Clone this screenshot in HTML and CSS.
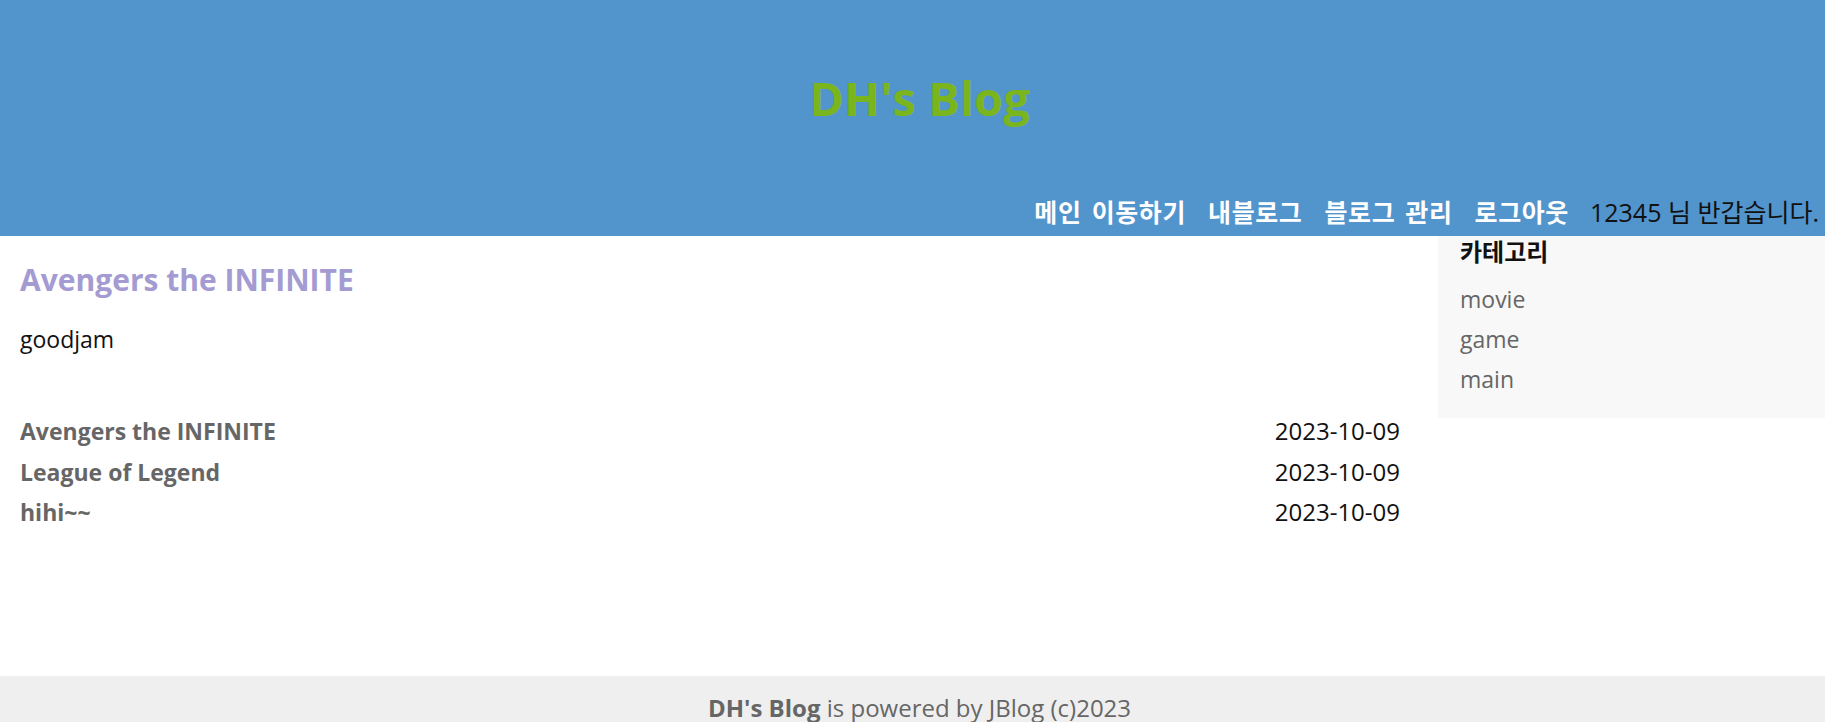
FILE: index.html
```html
<!DOCTYPE html>
<html lang="ko">
<head>
<meta charset="utf-8">
<title>DH's Blog</title>
<link rel="stylesheet" href="styles.css">
</head>
<body>
<div class="page">
  <header class="header">
    <h1 class="site-title">DH's Blog</h1>
    <nav class="nav">
      <a class="nav-link" href="#">메인 이동하기</a>
      <a class="nav-link" href="#">내블로그</a>
      <a class="nav-link" href="#">블로그 관리</a>
      <a class="nav-link" href="#">로그아웃</a>
      <span class="greeting">12345 님 반갑습니다.</span>
    </nav>
  </header>
  <div class="wrapper">
    <main class="content">
      <h2 class="post-title">Avengers the INFINITE</h2>
      <p class="post-body">goodjam</p>
      <ul class="post-list">
        <li class="post-row"><a class="post-link" href="#">Avengers the INFINITE</a><span class="post-date">2023-10-09</span></li>
        <li class="post-row"><a class="post-link" href="#">League of Legend</a><span class="post-date">2023-10-09</span></li>
        <li class="post-row"><a class="post-link" href="#">hihi~~</a><span class="post-date">2023-10-09</span></li>
      </ul>
    </main>
    <aside class="sidebar">
      <h3 class="side-title">카테고리</h3>
      <ul class="cat-list">
        <li><a class="cat-link" href="#">movie</a></li>
        <li><a class="cat-link" href="#">game</a></li>
        <li><a class="cat-link" href="#">main</a></li>
      </ul>
    </aside>
  </div>
  <footer class="footer">
    <p class="footer-text"><strong>DH's Blog</strong> is powered by JBlog (c)2023</p>
  </footer>
</div>
</body>
</html>
```

FILE: styles.css
```css
* { box-sizing: border-box; }
html, body { margin: 0; padding: 0; }
body {
  font-family: "Open Sans", "Noto Sans CJK KR", sans-serif;
  color: #111;
  background: #fff;
}
a { text-decoration: none; }
ul { list-style: none; margin: 0; padding: 0; }

.header {
  background: #5294cc;
  height: 236px;
  padding-top: 68px;
  display: flex;
  flex-direction: column;
}
.site-title {
  margin: 0;
  font-size: 47px;
  line-height: 60px;
  font-weight: 700;
  color: #7ab51d;
  text-align: center;
  padding-left: 14px;
}
.nav {
  margin-top: 69px;
  display: flex;
  justify-content: flex-end;
  align-items: baseline;
  gap: 22px;
  padding-right: 6px;
  font-size: 25px;
  line-height: 30px;
}
.nav-link { color: #fff; font-weight: 700; letter-spacing: 0.6px; word-spacing: 3px; }
.greeting { color: #111; margin-left: -1px; }

.wrapper {
  display: grid;
  grid-template-columns: 1438px 1fr;
  align-items: start;
  min-height: 440px;
}
.content { padding: 25px 38px 0 20px; }
.post-title {
  margin: 0;
  font-size: 30px;
  line-height: 38px;
  font-weight: 700;
  color: #a39bd1;
}
.post-body {
  margin: 25px 0 0;
  font-size: 23px;
  line-height: 30px;
}
.post-list { margin-top: 57px; }
.post-row {
  display: flex;
  justify-content: space-between;
  align-items: baseline;
  font-size: 23px;
  line-height: 39.5px;
}
.post-link { color: #666; font-weight: 700; }
.post-date { color: #111; font-size: 24px; }

.sidebar {
  background: #f8f8f8;
  padding: 1px 22px 19px;
}
.side-title {
  margin: 0;
  font-size: 24px;
  line-height: 30px;
  font-weight: 700;
  color: #111;
}
.cat-list { margin-top: 12px; }
.cat-list li { font-size: 23px; line-height: 40px; }
.cat-link { color: #666; }

.footer {
  background: #efefef;
  padding: 17px 0 10px 14px;
}
.footer-text {
  margin: 0;
  text-align: center;
  font-size: 24px;
  line-height: 30px;
  color: #666;
}
.footer-text strong { font-weight: 700; }
```
